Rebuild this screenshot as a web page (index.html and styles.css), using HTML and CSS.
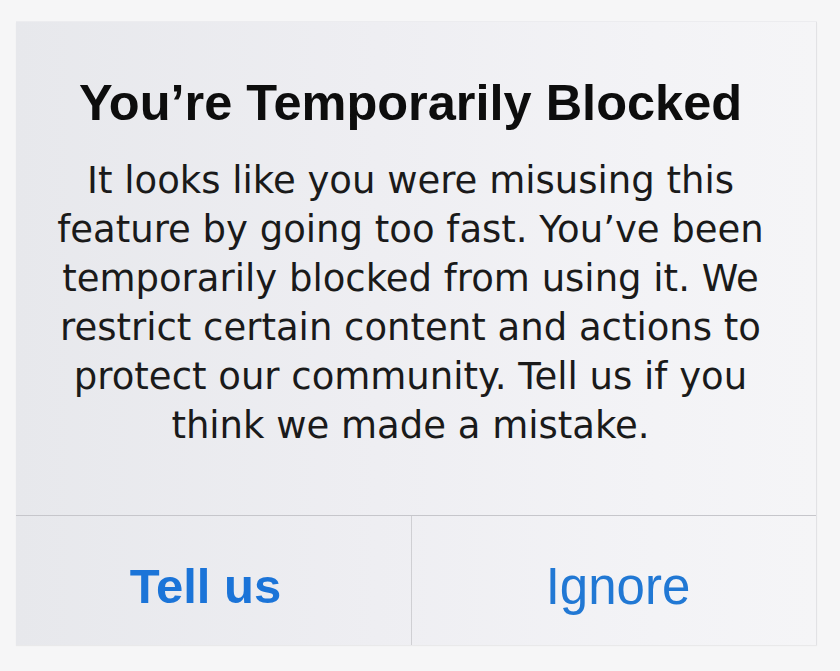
FILE: index.html
```html
<!DOCTYPE html>
<html lang="en">
<head>
<meta charset="utf-8">
<title>You’re Temporarily Blocked</title>
<link rel="stylesheet" href="styles.css">
</head>
<body>
<main class="page">
  <section class="alert" role="alertdialog" aria-labelledby="alert-title">
    <div class="alert-body">
      <h1 class="alert-title" id="alert-title">You’re Temporarily Blocked</h1>
      <p class="alert-message">It looks like you were misusing this<br>feature by going too fast. You’ve been<br>temporarily blocked from using it. We<br>restrict certain content and actions to<br>protect our community. Tell us if you<br>think we made a mistake.</p>
    </div>
    <div class="alert-actions">
      <button class="alert-btn alert-btn-primary" type="button">Tell us</button>
      <button class="alert-btn alert-btn-secondary" type="button">Ignore</button>
    </div>
  </section>
</main>
</body>
</html>
```
FILE: styles.css
```css
html, body {
  margin: 0;
  padding: 0;
  background: #f6f6f7;
}

.page {
  width: 840px;
  height: 671px;
  box-sizing: border-box;
  padding: 22px 23px 0 16px;
}

.alert {
  width: 801px;
  height: 623px;
  display: flex;
  flex-direction: column;
  background: linear-gradient(to right, #e7e8ec 0%, #eeeef2 45%, #f3f3f6 80%, #f5f5f7 100%);
  border-right: 1px solid #e2e2e5;
  box-shadow: 0 -1px 0 #ececef, 0 1px 1px rgba(0, 0, 0, 0.05);
  box-sizing: border-box;
}

.alert-body {
  flex: 1;
  display: flex;
  flex-direction: column;
  align-items: center;
  padding: 51px 28px 0 17px;
  border-bottom: 1px solid #c6c6cb;
}

.alert-title {
  margin: 0;
  font-family: "Liberation Sans", Arial, sans-serif;
  font-weight: 700;
  font-size: 50.5px;
  line-height: 60px;
  color: #0d0d0d;
  white-space: nowrap;
}

.alert-message {
  margin: 23px 0 0;
  font-family: "DejaVu Sans", "Liberation Sans", sans-serif;
  font-size: 37px;
  line-height: 49px;
  color: #1a1a1a;
  text-align: center;
  white-space: nowrap;
}

.alert-actions {
  height: 129px;
  display: flex;
}

.alert-btn {
  margin: 0;
  border: 0;
  background: transparent;
  display: flex;
  align-items: center;
  justify-content: center;
  font-family: "Liberation Sans", Arial, sans-serif;
  color: #1b74d8;
  box-sizing: border-box;
  padding-top: 12px;
  line-height: normal;
}

.alert-btn-primary {
  flex: 0 0 396px;
  font-weight: 700;
  font-size: 49px;
  padding-right: 22px;
  border-right: 1px solid #cfcfd3;
}

.alert-btn-secondary {
  flex: 1 1 auto;
  font-weight: 400;
  font-size: 51px;
  padding-left: 14px;
  color: #2178d4;
}
```
